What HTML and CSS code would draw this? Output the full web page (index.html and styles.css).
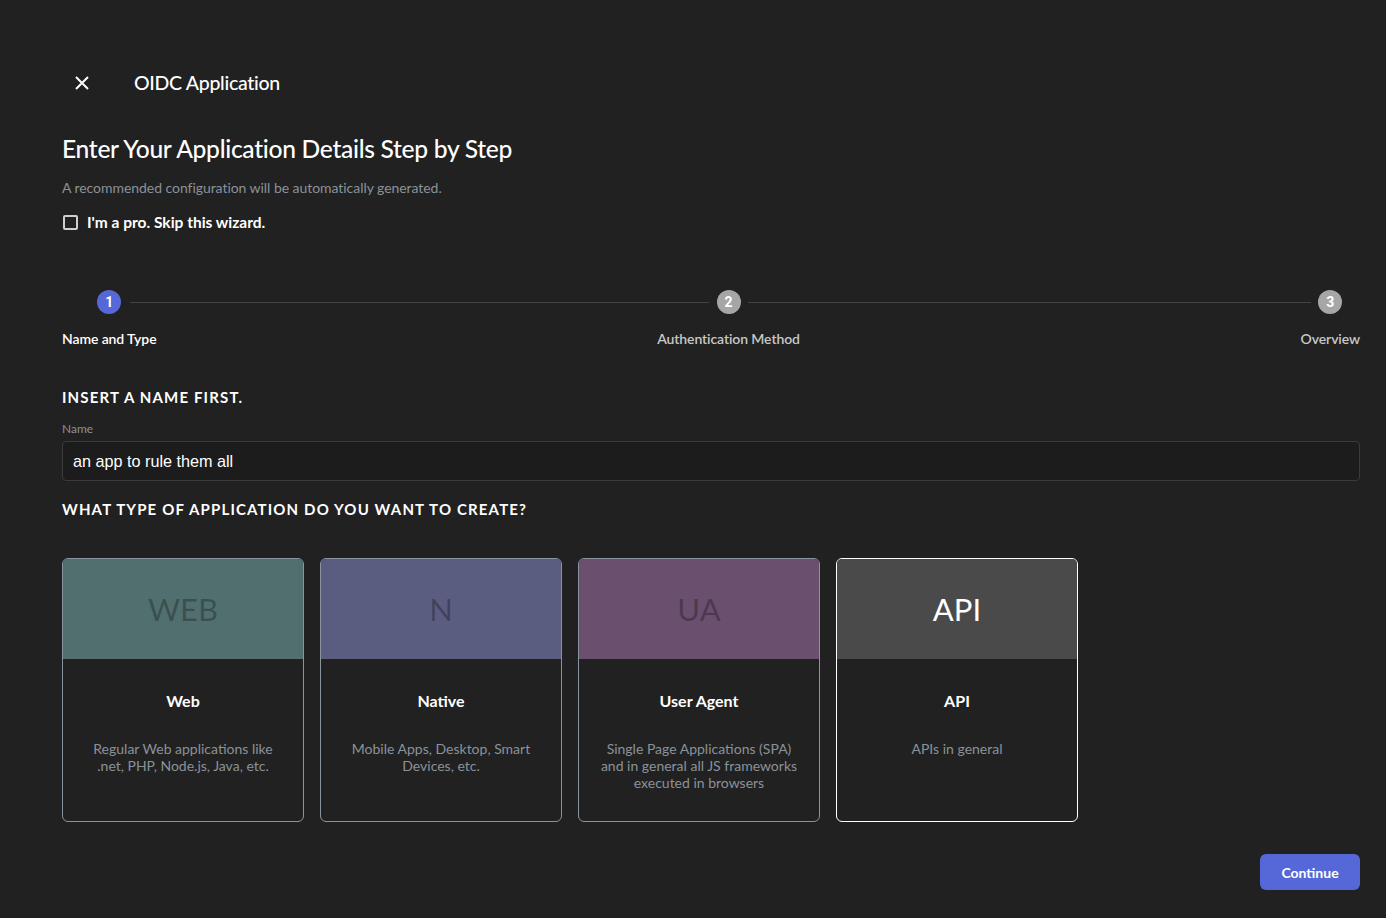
FILE: index.html
```html
<!DOCTYPE html>
<html lang="en">
<head>
<meta charset="utf-8">
<title>OIDC Application</title>
<link rel="stylesheet" href="styles.css">
</head>
<body>
<div class="page">
  <header class="topbar">
    <button class="close" aria-label="Close">
      <svg width="14" height="14" viewBox="0 0 14 14"><path d="M1 1 L13 13 M13 1 L1 13" stroke="#ffffff" stroke-width="2" fill="none"/></svg>
    </button>
    <h1 class="app-title">OIDC Application</h1>
  </header>

  <h2 class="heading">Enter Your Application Details Step by Step</h2>
  <p class="subtitle">A recommended configuration will be automatically generated.</p>
  <label class="check">
    <span class="box"></span>
    <span class="check-label">I'm a pro. Skip this wizard.</span>
  </label>

  <div class="stepper">
    <div class="step">
      <span class="dot active">1</span>
      <span class="step-label current">Name and Type</span>
    </div>
    <div class="connector"><div class="line l1"></div></div>
    <div class="step">
      <span class="dot">2</span>
      <span class="step-label">Authentication Method</span>
    </div>
    <div class="connector"><div class="line l2"></div></div>
    <div class="step">
      <span class="dot">3</span>
      <span class="step-label">Overview</span>
    </div>
  </div>

  <h3 class="section">Insert a name first.</h3>
  <div class="field">
    <span class="field-label">Name</span>
    <div class="input">an app to rule them all</div>
  </div>

  <h3 class="section section-type">What type of application do you want to create?</h3>

  <div class="cards">
    <div class="card">
      <div class="card-head web"><span class="abbr">WEB</span></div>
      <div class="card-body">
        <div class="card-title">Web</div>
        <div class="card-desc">Regular Web applications like .net, PHP, Node.js, Java, etc.</div>
      </div>
    </div>
    <div class="card">
      <div class="card-head native"><span class="abbr">N</span></div>
      <div class="card-body">
        <div class="card-title">Native</div>
        <div class="card-desc">Mobile Apps, Desktop, Smart Devices, etc.</div>
      </div>
    </div>
    <div class="card">
      <div class="card-head ua"><span class="abbr">UA</span></div>
      <div class="card-body">
        <div class="card-title">User Agent</div>
        <div class="card-desc">Single Page Applications (SPA) and in general all JS frameworks executed in browsers</div>
      </div>
    </div>
    <div class="card selected">
      <div class="card-head api"><span class="abbr">API</span></div>
      <div class="card-body">
        <div class="card-title">API</div>
        <div class="card-desc">APIs in general</div>
      </div>
    </div>
  </div>

  <div class="actions">
    <button class="continue">Continue</button>
  </div>
</div>
</body>
</html>
```
FILE: styles.css
```css
* { box-sizing: border-box; }
html, body {
  margin: 0;
  background: #212121;
  color: #ffffff;
  font-family: Lato, "Noto Sans", sans-serif;
}
.page {
  padding: 62px 26px 0 62px;
  min-height: 918px;
}
.topbar {
  display: flex;
  align-items: center;
  height: 42px;
}
.close {
  background: none;
  border: 0;
  padding: 0;
  width: 40px;
  height: 40px;
  display: flex;
  align-items: center;
  justify-content: center;
  margin-right: 32px;
}
.app-title {
  margin: 0;
  font-size: 19.5px;
  font-weight: 500;
  letter-spacing: -0.3px;
  position: relative;
  top: -1px;
}
.heading {
  margin: 29px 0 0;
  font-size: 24.6px;
  font-weight: 500;
  line-height: 32px;
  letter-spacing: -0.3px;
}
.subtitle {
  margin: 14px 0 0;
  font-size: 14px;
  color: #8a929a;
  line-height: 18px;
  letter-spacing: -0.05px;
}
.check {
  display: flex;
  align-items: center;
  margin-top: 15px;
  height: 20px;
}
.box {
  width: 15px;
  height: 15px;
  border: 2px solid #cfcfcf;
  border-radius: 2px;
  margin-left: 1px;
  margin-right: 9px;
}
.check-label {
  font-size: 15.5px;
  font-weight: 700;
}
.stepper {
  display: flex;
  align-items: flex-start;
  margin-top: 58px;
}
.step {
  display: flex;
  flex-direction: column;
  align-items: center;
}
.dot {
  width: 24px;
  height: 24px;
  border-radius: 50%;
  background: #a6a6a6;
  color: #ffffff;
  font-family: Roboto, "Liberation Sans", sans-serif;
  font-weight: 700;
  font-size: 14px;
  display: flex;
  align-items: center;
  justify-content: center;
}
.dot.active { background: #5668d8; }
.step-label {
  margin-top: 16px;
  font-size: 14px;
  font-weight: 600;
  color: #c8c8c8;
  white-space: nowrap;
  line-height: 18px;
  letter-spacing: -0.1px;
}
.step-label.current { color: #ffffff; }
.connector {
  flex: 1;
  padding-top: 12px;
}
.line {
  height: 1px;
  background: #444444;
}
.l1 { margin: 0 -52px 0 -26px; }
.l2 { margin: 0 -10px 0 -52px; }

.section {
  margin: 40px 0 0;
  font-size: 15px;
  font-weight: 700;
  text-transform: uppercase;
  letter-spacing: 1.15px;
  line-height: 18px;
}
.field { margin-top: 15px; }
.field-label {
  display: block;
  font-size: 12px;
  color: #8a929a;
  line-height: 16px;
}
.input {
  margin-top: 4px;
  height: 40px;
  border: 1px solid #3b3b3b;
  border-radius: 4px;
  background: #1c1c1c;
  padding: 0 10px;
  display: flex;
  align-items: center;
  font-family: "Liberation Sans", Arial, sans-serif;
  font-size: 16.2px;
  color: #ffffff;
}
.section-type { margin-top: 19px; }

.cards {
  display: flex;
  gap: 16px;
  margin-top: 40px;
}
.card {
  width: 242px;
  height: 264px;
  border: 1px solid #8a949e;
  border-radius: 6px;
  overflow: hidden;
  background: #212121;
}
.card.selected { border-color: #ffffff; }
.card-head {
  height: 100px;
  display: flex;
  align-items: center;
  justify-content: center;
}
.web { background: #516f6e; }
.native { background: #5a5d80; }
.ua { background: #6a4f6f; }
.api { background: #4a4a4a; }
.abbr {
  font-size: 31px;
  font-weight: 400;
  color: rgba(0, 0, 0, 0.28);
}
.selected .abbr { color: #ffffff; }
.card-body {
  padding: 32px 20px 0;
  text-align: center;
}
.card-title {
  font-size: 16px;
  font-weight: 700;
  line-height: 20px;
}
.card-desc {
  margin-top: 29px;
  font-size: 14px;
  line-height: 17px;
  color: #8a929a;
}
.actions {
  display: flex;
  justify-content: flex-end;
  margin-top: 32px;
}
.continue {
  width: 100px;
  height: 36px;
  border: 0;
  border-radius: 6px;
  background: #5668d8;
  color: #ffffff;
  font-family: Lato, sans-serif;
  font-size: 14px;
  font-weight: 700;
}
```
